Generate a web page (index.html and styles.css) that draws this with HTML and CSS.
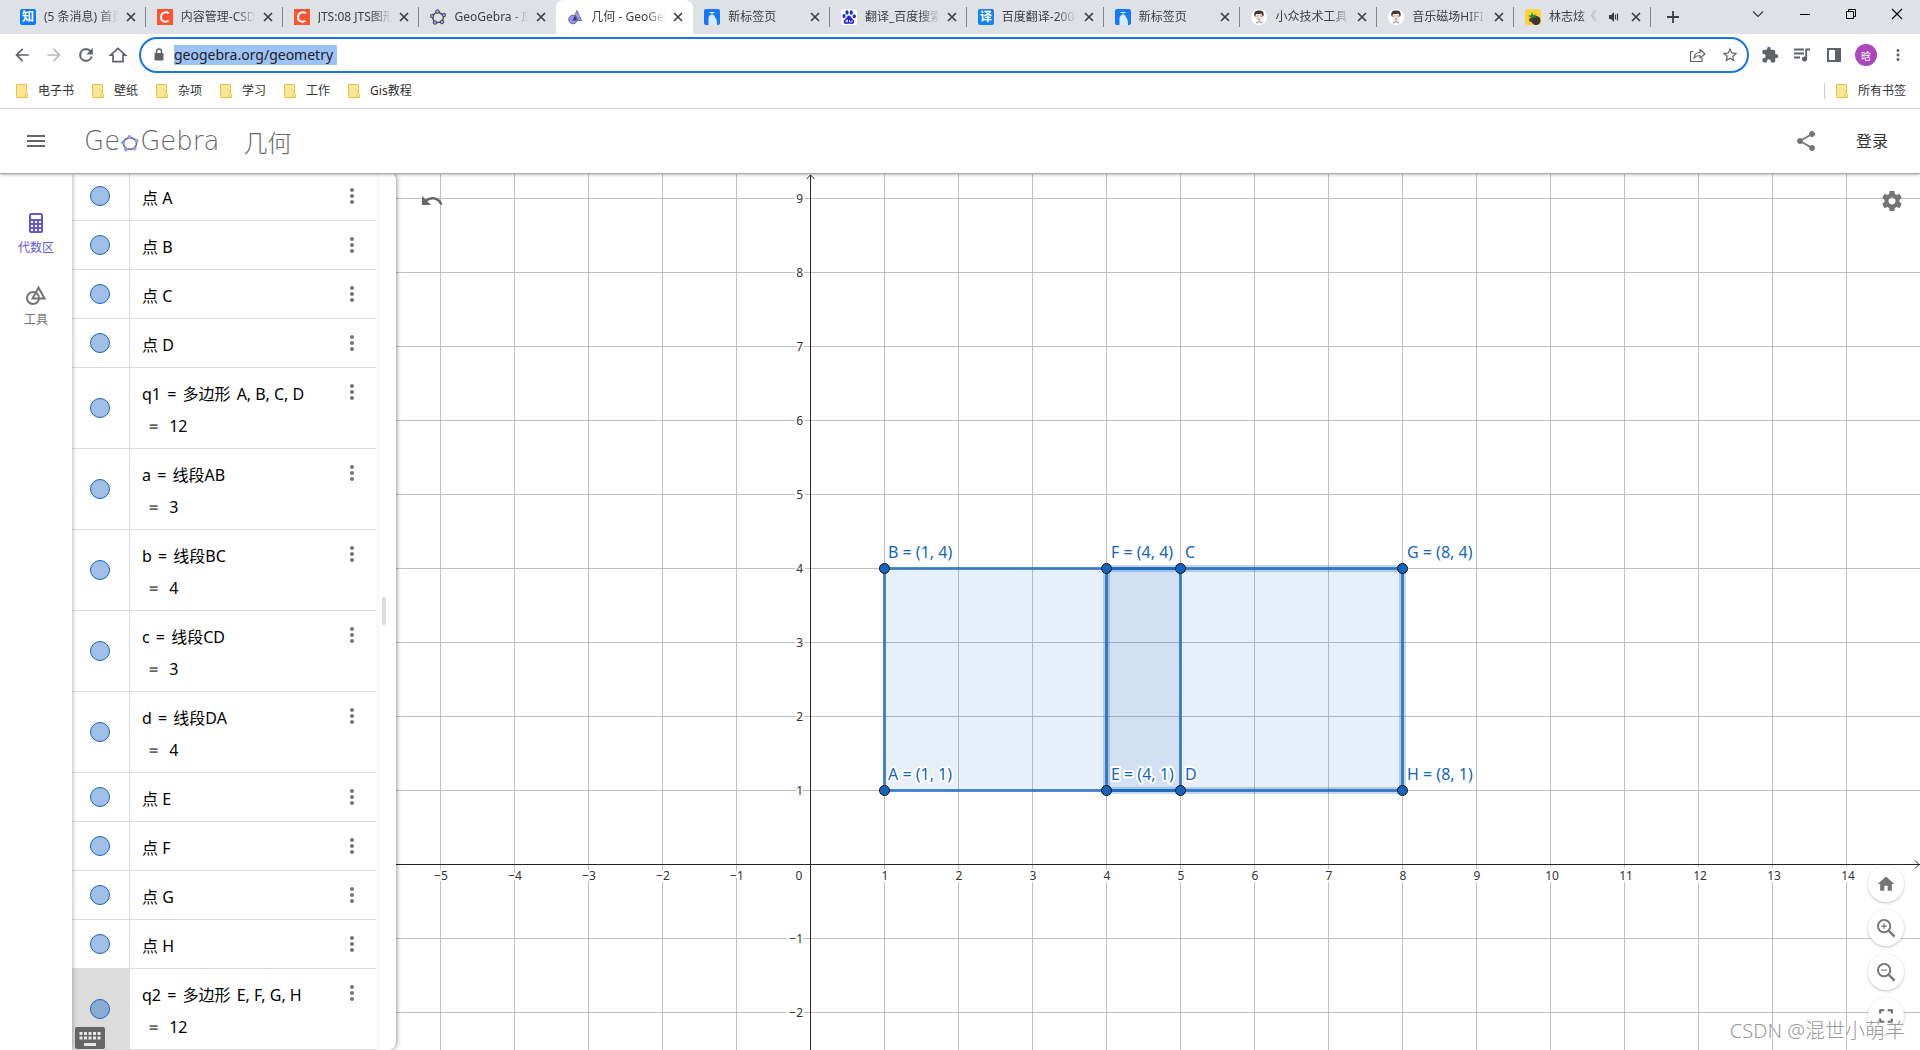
FILE: index.html
```html
<!DOCTYPE html>
<html lang="zh-CN">
<head>
<meta charset="utf-8">
<title>几何 - GeoGebra</title>
<link rel="stylesheet" href="styles.css">
</head>
<body>
<svg class="defs" width="0" height="0" aria-hidden="true">
  <symbol id="i-close" viewBox="0 0 16 16"><path d="M4 4l8 8M12 4l-8 8" fill="none" stroke="#3c4043" stroke-width="1.7"/></symbol>
  <symbol id="i-folder" viewBox="0 0 16 16"><path d="M2.5 1.500h10v9l1 .8v3.200h-11z" fill="#ffe591" stroke="#e8c348"/><path d="M11 14.500v-3l1.500-1" fill="none" stroke="#e8c348"/></symbol>
  <symbol id="i-csdn" viewBox="0 0 16 16"><rect width="16" height="16" fill="#fc5531"/><path d="M12 4.300C9 2.300 4.200 3.200 4 8c-.1 4.500 4.300 5.700 7.500 3.800" fill="none" stroke="#fff" stroke-width="1.900"/></symbol>
  <symbol id="i-newtab" viewBox="0 0 16 16"><rect width="16" height="16" rx="2" fill="#1478ff"/><path d="M5.500 3h5v1h-2v1.500h-1V4h-2z" fill="#fff"/><path d="M4.500 16V9.500C4.500 4.500 11 4.500 11 8.500c2 1.500 2 4 2 7.500z" fill="#d9ecff"/></symbol>
  <symbol id="i-face" viewBox="0 0 16 16"><circle cx="8" cy="8" r="8" fill="#fff"/><path d="M5 5.500c0 4 1 6 3 6s3.200-2 3.200-6" fill="#fbe9e1" stroke="#bbb" stroke-width=".5"/><path d="M3.500 7C2.500 2.500 5 1.500 8 1.500s5.500 1 4.500 5.500l-1 1c0-2-.5-3-1.500-3.500-2 .8-3.500.3-5 .5-.5 1-.5 2-.5 3z" fill="#40352f"/><path d="M6 7h1.500M9 7h1.500M7 10h2M5 14l3-1.500 3 1.500" stroke="#554840" stroke-width=".7" fill="none"/></symbol>
  <symbol id="i-dots" viewBox="0 0 24 24"><path d="M12 8c1.100 0 2-.9 2-2s-.9-2-2-2-2 .9-2 2 .9 2 2 2zm0 2c-1.100 0-2 .9-2 2s.9 2 2 2 2-.9 2-2-.9-2-2-2zm0 6c-1.100 0-2 .9-2 2s.9 2 2 2 2-.9 2-2-.9-2-2-2z" fill="currentColor"/></symbol>
</svg>

<header class="browser">
  <div class="tabstrip">
    <div class="tab">
      <svg class="favicon" viewBox="0 0 16 16"><rect width="16" height="16" rx="2" fill="#0b7cff"/><text x="8" y="12" class="glyph">知</text></svg>
      <span class="tab-title">(5 条消息) 首页</span><button class="tab-close" aria-label="关闭"><svg><use href="#i-close"/></svg></button>
    </div>
    <div class="tab">
      <svg class="favicon"><use href="#i-csdn"/></svg>
      <span class="tab-title">内容管理-CSDN</span><button class="tab-close" aria-label="关闭"><svg><use href="#i-close"/></svg></button>
    </div>
    <div class="tab">
      <svg class="favicon"><use href="#i-csdn"/></svg>
      <span class="tab-title">JTS:08 JTS图形</span><button class="tab-close" aria-label="关闭"><svg><use href="#i-close"/></svg></button>
    </div>
    <div class="tab tab-plain">
      <svg class="favicon" viewBox="0 0 16 16"><path d="M7.500 2.500l6.500 4-2 6.500-7.500.8L2 7z" fill="none" stroke="#555" stroke-width="1.500"/><g fill="#9999ff" stroke="#333" stroke-width=".8"><circle cx="7.500" cy="2.500" r="1.800"/><circle cx="14" cy="6" r="1.800"/><circle cx="12" cy="13" r="1.800"/><circle cx="5" cy="13.500" r="1.800"/><circle cx="2" cy="7" r="1.800"/></g></svg>
      <span class="tab-title">GeoGebra - 应用</span><button class="tab-close" aria-label="关闭"><svg><use href="#i-close"/></svg></button>
    </div>
    <div class="tab tab-active">
      <svg class="favicon" viewBox="0 0 16 16"><path d="M10 1.500l4.500 10H5.500z" fill="#9999ff" stroke="#666" stroke-width=".8"/><circle cx="6" cy="10.500" r="4.300" fill="#8080f8" fill-opacity=".85" stroke="#555" stroke-width=".8"/><path d="M7.700 7l2 2.500-.5 2H5.700z" fill="#333a70"/></svg>
      <span class="tab-title">几何 - GeoGebra</span><button class="tab-close" aria-label="关闭"><svg><use href="#i-close"/></svg></button>
    </div>
    <div class="tab">
      <svg class="favicon"><use href="#i-newtab"/></svg>
      <span class="tab-title">新标签页</span><button class="tab-close" aria-label="关闭"><svg><use href="#i-close"/></svg></button>
    </div>
    <div class="tab">
      <svg class="favicon" viewBox="0 0 16 16"><rect width="16" height="16" rx="1" fill="#fff"/><g fill="#2529d8"><ellipse cx="3" cy="7" rx="1.600" ry="2"/><ellipse cx="6" cy="3.500" rx="1.600" ry="2.200"/><ellipse cx="10.300" cy="3.500" rx="1.600" ry="2.200"/><ellipse cx="13.300" cy="7.300" rx="1.600" ry="2"/><path d="M8 6.500c2 0 2.300 2.500 4 3.800 2.200 1.800 1.300 5-1.500 4.700-1.600-.2-3.200-.2-5 0C2.500 15.300 1.800 12 4 10.300 5.800 9 6 6.500 8 6.500z"/></g><path d="M6.500 10.500v2.500h-1.500v-1.500h1.500M8.500 11v2H11v-2" fill="none" stroke="#fff" stroke-width=".8"/></svg>
      <span class="tab-title">翻译_百度搜索</span><button class="tab-close" aria-label="关闭"><svg><use href="#i-close"/></svg></button>
    </div>
    <div class="tab">
      <svg class="favicon" viewBox="0 0 16 16"><rect width="16" height="16" rx="2" fill="#1283f5"/><text x="8" y="12" class="glyph">译</text></svg>
      <span class="tab-title">百度翻译-200种</span><button class="tab-close" aria-label="关闭"><svg><use href="#i-close"/></svg></button>
    </div>
    <div class="tab">
      <svg class="favicon"><use href="#i-newtab"/></svg>
      <span class="tab-title">新标签页</span><button class="tab-close" aria-label="关闭"><svg><use href="#i-close"/></svg></button>
    </div>
    <div class="tab">
      <svg class="favicon"><use href="#i-face"/></svg>
      <span class="tab-title">小众技术工具</span><button class="tab-close" aria-label="关闭"><svg><use href="#i-close"/></svg></button>
    </div>
    <div class="tab">
      <svg class="favicon"><use href="#i-face"/></svg>
      <span class="tab-title">音乐磁场HIFI</span><button class="tab-close" aria-label="关闭"><svg><use href="#i-close"/></svg></button>
    </div>
    <div class="tab">
      <svg class="favicon" viewBox="0 0 16 16"><rect width="16" height="16" rx="3" fill="#fdd23c"/><circle cx="11" cy="11.500" r="4.500" fill="#3b3533"/><path d="M3 7l3-1 1-3 1.500 3L12 5l-2 2 2 2-4-1-3 3 .500-3z" fill="#28902c"/><circle cx="6" cy="11" r="2" fill="#4d3a2c"/></svg>
      <span class="tab-title">林志炫《</span>
      <svg class="audio" viewBox="0 0 12 12"><path d="M1 4h2l3-3v10L3 8H1z" fill="#3c4043"/><path d="M7.500 3.500v5M9.500 2.500v7" stroke="#3c4043" stroke-width="1.200"/></svg>
      <button class="tab-close" aria-label="关闭"><svg><use href="#i-close"/></svg></button>
    </div>
    <div class="window-controls">
      <button aria-label="新标签页"><svg viewBox="0 0 16 16"><path d="M8 2v12M2 8h12" stroke="#3c4043" stroke-width="1.800"/></svg></button>
      <button class="chevron" aria-label="搜索标签页"><svg viewBox="0 0 16 16"><path d="M3 5.500l5 5 5-5" fill="none" stroke="#333" stroke-width="1.100"/></svg></button>
      <button aria-label="最小化"><svg viewBox="0 0 16 16"><path d="M3 8.500h10" stroke="#000"/></svg></button>
      <button aria-label="还原"><svg viewBox="0 0 16 16"><path d="M3.500 5.500h7v7h-7zM5.500 5V3.500h7v7H11" fill="none" stroke="#000"/></svg></button>
      <button aria-label="关闭窗口"><svg viewBox="0 0 16 16"><path d="M3 3l10 10M13 3L3 13" stroke="#000" stroke-width="1.100"/></svg></button>
    </div>
  </div>

  <div class="toolbar">
    <nav class="nav-buttons">
      <button aria-label="后退"><svg viewBox="0 0 24 24"><path d="M20 11H7.800l5.600-5.600L12 4l-8 8 8 8 1.400-1.400L7.800 13H20z" fill="#5f6368"/></svg></button>
      <button aria-label="前进"><svg viewBox="0 0 24 24"><path d="M12 4l-1.400 1.400 5.600 5.600H4v2h12.200l-5.600 5.600L12 20l8-8z" fill="#bbb"/></svg></button>
      <button aria-label="刷新"><svg viewBox="0 0 24 24"><path d="M17.650 6.350A7.950 7.950 0 0 0 12 4a8 8 0 1 0 7.730 10h-2.080A6 6 0 1 1 12 6c1.660 0 3.140.690 4.220 1.780L13 11h7V4z" fill="#5f6368" stroke="#5f6368" stroke-width=".5"/></svg></button>
      <button aria-label="主页"><svg viewBox="0 0 24 24"><path d="M12 4L3 12.200h3V20h12v-7.800h3z" fill="none" stroke="#5f6368" stroke-width="2"/></svg></button>
    </nav>
    <div class="omnibox">
      <svg class="lock" viewBox="0 0 12 16"><path d="M3.500 6V4.500a2.500 2.500 0 0 1 5 0V6" fill="none" stroke="#5f6368" stroke-width="1.500"/><rect x="1.500" y="6" width="9" height="7.500" rx="1" fill="#5f6368"/></svg>
      <input class="url" type="text" value="geogebra.org/geometry" aria-label="地址栏">
      <div class="omnibox-actions">
        <button aria-label="分享"><svg viewBox="0 0 18 18"><path d="M4.500 5.500h-3v10h11.500v-3.500" fill="none" stroke="#5f6368" stroke-width="1.200"/><path d="M5 12c.5-3.500 2.500-5.500 6-5.500V3.500L16 8l-5 4V9.500C8.500 9.500 6.500 10.300 5 12z" fill="none" stroke="#5f6368" stroke-width="1.200" stroke-linejoin="round"/></svg></button>
        <button aria-label="收藏"><svg viewBox="0 0 24 24"><path d="M22 9.240l-7.190-.62L12 2 9.190 8.630 2 9.240l5.460 4.730L5.820 21 12 17.270 18.180 21l-1.630-7.030zM12 15.400l-3.760 2.270 1-4.280-3.320-2.880 4.380-.38L12 6.100l1.710 4.040 4.380.38-3.320 2.880 1 4.280z" fill="#5f6368"/></svg></button>
      </div>
    </div>
    <div class="extensions">
      <button aria-label="扩展程序"><svg viewBox="0 0 24 24"><path d="M20.500 11H19V7a2 2 0 0 0-2-2h-4V3.500a2.500 2.500 0 0 0-5 0V5H4a2 2 0 0 0-2 2v3.800h1.500a2.700 2.700 0 0 1 0 5.400H2V20a2 2 0 0 0 2 2h3.800v-1.500a2.700 2.700 0 0 1 5.400 0V22H17a2 2 0 0 0 2-2v-4h1.500a2.500 2.500 0 0 0 0-5z" fill="#5f6368"/></svg></button>
      <button aria-label="媒体"><svg viewBox="0 0 18 18"><path d="M1 3.500h10M1 7.500h10M1 11.500h6" stroke="#5f6368" stroke-width="1.800"/><circle cx="11.500" cy="13" r="2.500" fill="#5f6368"/><path d="M13.200 13V3.500H17" fill="none" stroke="#5f6368" stroke-width="1.800"/></svg></button>
      <button aria-label="侧边栏"><svg viewBox="0 0 18 18"><path d="M2 2h14v14H2zM4 4v10h6V4z" fill="#5f6368" fill-rule="evenodd"/></svg></button>
      <button class="avatar" aria-label="个人资料">晗</button>
      <button aria-label="菜单" class="chrome-menu"><svg><use href="#i-dots"/></svg></button>
    </div>
  </div>

  <nav class="bookmarks">
    <a href="#"><svg><use href="#i-folder"/></svg>电子书</a>
    <a href="#"><svg><use href="#i-folder"/></svg>壁纸</a>
    <a href="#"><svg><use href="#i-folder"/></svg>杂项</a>
    <a href="#"><svg><use href="#i-folder"/></svg>学习</a>
    <a href="#"><svg><use href="#i-folder"/></svg>工作</a>
    <a href="#"><svg><use href="#i-folder"/></svg>Gis教程</a>
    <a href="#" class="all-bookmarks"><svg><use href="#i-folder"/></svg>所有书签</a>
  </nav>
</header>

<div class="appbar">
  <button class="menu" aria-label="菜单"><svg viewBox="0 0 24 24"><path d="M3 18h18v-2H3zm0-5h18v-2H3zm0-7v2h18V6z" fill="#666"/></svg></button>
  <a class="logo" href="#" aria-label="GeoGebra"><span>Ge</span><svg viewBox="0 0 18 18"><ellipse cx="9" cy="9.500" rx="6.500" ry="5.800" fill="none" stroke="#666" stroke-width="1.500"/><g fill="#9999ff"><circle cx="8.500" cy="3" r="2"/><circle cx="15.700" cy="7" r="2"/><circle cx="13.500" cy="14.500" r="2"/><circle cx="5" cy="15.500" r="2"/><circle cx="2" cy="8.500" r="2"/></g></svg><span>Gebra</span></a>
  <h1 class="app-name">几何</h1>
  <button class="share" aria-label="分享"><svg viewBox="0 0 24 24"><path d="M18 16.080c-.76 0-1.440.3-1.960.77L8.910 12.700c.05-.23.09-.46.09-.7s-.04-.47-.09-.7l7.050-4.110c.54.5 1.250.81 2.040.81 1.660 0 3-1.340 3-3s-1.340-3-3-3-3 1.340-3 3c0 .24.04.47.09.7L8.040 9.810C7.500 9.310 6.790 9 6 9c-1.660 0-3 1.340-3 3s1.340 3 3 3c.79 0 1.500-.31 2.040-.81l7.120 4.160c-.05.21-.08.43-.08.65 0 1.610 1.310 2.920 2.920 2.920s2.920-1.310 2.920-2.920-1.310-2.920-2.920-2.920z" fill="#757575"/></svg></button>
  <a class="signin" href="#">登录</a>
</div>

<main class="workspace">
  <nav class="rail">
    <button class="rail-item rail-selected"><svg viewBox="0 0 24 24"><path fill-rule="evenodd" d="M7 2h10a2 2 0 0 1 2 2v16a2 2 0 0 1-2 2H7a2 2 0 0 1-2-2V4a2 2 0 0 1 2-2zM7 4v4h10V4zM7 10v2h2v-2zM11 10v2h2v-2zM15 10v2h2v-2zM7 14v2h2v-2zM11 14v2h2v-2zM15 14v2h2v-2zM7 18v2h2v-2zM11 18v2h2v-2zM15 18v2h2v-2z" fill="currentColor"/></svg>代数区</button>
    <button class="rail-item"><svg viewBox="0 0 24 24"><circle cx="9" cy="15" r="6" fill="none" stroke="currentColor" stroke-width="2"/><path d="M14.500 4.500L20.500 15.500H8.500z" fill="none" stroke="currentColor" stroke-width="2"/></svg>工具</button>
  </nav>

  <section class="algebra">
    <ul class="rows">
      <li class="row"><div class="cell"><button class="marker" aria-label="显示 A"></button></div><div class="body"><p>点 A</p></div><button class="more" aria-label="更多"><svg><use href="#i-dots"/></svg></button></li>
      <li class="row"><div class="cell"><button class="marker" aria-label="显示 B"></button></div><div class="body"><p>点 B</p></div><button class="more" aria-label="更多"><svg><use href="#i-dots"/></svg></button></li>
      <li class="row"><div class="cell"><button class="marker" aria-label="显示 C"></button></div><div class="body"><p>点 C</p></div><button class="more" aria-label="更多"><svg><use href="#i-dots"/></svg></button></li>
      <li class="row"><div class="cell"><button class="marker" aria-label="显示 D"></button></div><div class="body"><p>点 D</p></div><button class="more" aria-label="更多"><svg><use href="#i-dots"/></svg></button></li>
      <li class="row"><div class="cell"><button class="marker" aria-label="显示 q1"></button></div><div class="body"><p>q1 <span class="op">=</span> 多边形 <span class="args">A, B, C, D</span></p><p class="value"><b>=</b>12</p></div><button class="more" aria-label="更多"><svg><use href="#i-dots"/></svg></button></li>
      <li class="row"><div class="cell"><button class="marker" aria-label="显示 a"></button></div><div class="body"><p>a <span class="op">=</span> 线段AB</p><p class="value"><b>=</b>3</p></div><button class="more" aria-label="更多"><svg><use href="#i-dots"/></svg></button></li>
      <li class="row"><div class="cell"><button class="marker" aria-label="显示 b"></button></div><div class="body"><p>b <span class="op">=</span> 线段BC</p><p class="value"><b>=</b>4</p></div><button class="more" aria-label="更多"><svg><use href="#i-dots"/></svg></button></li>
      <li class="row"><div class="cell"><button class="marker" aria-label="显示 c"></button></div><div class="body"><p>c <span class="op">=</span> 线段CD</p><p class="value"><b>=</b>3</p></div><button class="more" aria-label="更多"><svg><use href="#i-dots"/></svg></button></li>
      <li class="row"><div class="cell"><button class="marker" aria-label="显示 d"></button></div><div class="body"><p>d <span class="op">=</span> 线段DA</p><p class="value"><b>=</b>4</p></div><button class="more" aria-label="更多"><svg><use href="#i-dots"/></svg></button></li>
      <li class="row"><div class="cell"><button class="marker" aria-label="显示 E"></button></div><div class="body"><p>点 E</p></div><button class="more" aria-label="更多"><svg><use href="#i-dots"/></svg></button></li>
      <li class="row"><div class="cell"><button class="marker" aria-label="显示 F"></button></div><div class="body"><p>点 F</p></div><button class="more" aria-label="更多"><svg><use href="#i-dots"/></svg></button></li>
      <li class="row"><div class="cell"><button class="marker" aria-label="显示 G"></button></div><div class="body"><p>点 G</p></div><button class="more" aria-label="更多"><svg><use href="#i-dots"/></svg></button></li>
      <li class="row"><div class="cell"><button class="marker" aria-label="显示 H"></button></div><div class="body"><p>点 H</p></div><button class="more" aria-label="更多"><svg><use href="#i-dots"/></svg></button></li>
      <li class="row row-selected"><div class="cell"><button class="marker" aria-label="显示 q2"></button></div><div class="body"><p>q2 <span class="op">=</span> 多边形 <span class="args">E, F, G, H</span></p><p class="value"><b>=</b>12</p></div><button class="more" aria-label="更多"><svg><use href="#i-dots"/></svg></button></li>
    </ul>
    <div class="scroll-track"></div>
    <div class="splitter"></div>
    <button class="keyboard" aria-label="键盘"><svg viewBox="0 0 30 22"><rect width="30" height="22" rx="2" fill="#666"/><path d="M4.500 6.500h21.500M4.500 11h21.500" stroke="#e6e6e6" stroke-width="3" stroke-dasharray="3 1.500"/><path d="M9 17.500h12" stroke="#e6e6e6" stroke-width="3"/></svg></button>
  </section>

  <section class="graphics">
    <svg class="plot" role="img" aria-label="绘图区">
      <defs>
        <pattern id="grid" patternUnits="userSpaceOnUse" x="44" y="26" width="74" height="74"><path d="M0 .5h74M.5 0v74" stroke="#c0c0c0"/></pattern>
      </defs>
      <rect width="100%" height="100%" fill="url(#grid)"/>
      <g class="axes">
        <path d="M414.500 3v1000M410.500 7l4-4 4 4"/>
        <line x1="0" y1="692.500" x2="100%" y2="692.500"/>
        <svg x="100%" y="692" overflow="visible"><path d="M-5-3.500l4 4-4 4"/></svg>
      </g>
      <g class="ticks ticks-x">
        <text x="45" y="708">−5</text><text x="119" y="708">−4</text><text x="193" y="708">−3</text><text x="267" y="708">−2</text><text x="341" y="708">−1</text>
        <text x="403" y="708">0</text>
        <text x="489" y="708">1</text><text x="563" y="708">2</text><text x="637" y="708">3</text><text x="711" y="708">4</text><text x="785" y="708">5</text><text x="859" y="708">6</text><text x="933" y="708">7</text><text x="1007" y="708">8</text><text x="1081" y="708">9</text><text x="1156" y="708">10</text><text x="1230" y="708">11</text><text x="1304" y="708">12</text><text x="1378" y="708">13</text><text x="1452" y="708">14</text>
      </g>
      <g class="ticks ticks-y">
        <text x="407" y="31">9</text><text x="407" y="105">8</text><text x="407" y="179">7</text><text x="407" y="253">6</text><text x="407" y="327">5</text><text x="407" y="401">4</text><text x="407" y="475">3</text><text x="407" y="549">2</text><text x="407" y="623">1</text><text x="407" y="771">−1</text><text x="407" y="845">−2</text>
      </g>
      <g class="shapes">
        <path class="fill" d="M488.500 396.500h296v222h-296z"/>
        <path class="fill" d="M710.500 396.500h296v222h-296z"/>
        <path class="halo" d="M710.500 396.500h296v222h-296z"/>
        <path class="edge" d="M488.500 396.500h296v222h-296z"/>
        <path class="edge" d="M710.500 396.500h296v222h-296z"/>
      </g>
      <g class="labels">
        <text x="492" y="386">B = (1, 4)</text><text x="715" y="386">F = (4, 4)</text><text x="789" y="386">C</text><text x="1011" y="386">G = (8, 4)</text>
        <text x="492" y="608">A = (1, 1)</text><text x="715" y="608">E = (4, 1)</text><text x="789" y="608">D</text><text x="1011" y="608">H = (8, 1)</text>
      </g>
      <g class="points">
        <circle cx="488.500" cy="396.500" r="5"/><circle cx="710.500" cy="396.500" r="5"/><circle cx="784.500" cy="396.500" r="5"/><circle cx="1006.500" cy="396.500" r="5"/>
        <circle cx="488.500" cy="618.500" r="5"/><circle cx="710.500" cy="618.500" r="5"/><circle cx="784.500" cy="618.500" r="5"/><circle cx="1006.500" cy="618.500" r="5"/>
      </g>
    </svg>
    <button class="undo" aria-label="撤销"><svg viewBox="0 0 24 24"><path d="M12.500 8c-2.650 0-5.050.99-6.900 2.600L2 7v9h9l-3.620-3.620c1.390-1.160 3.160-1.880 5.120-1.880 3.540 0 6.550 2.310 7.600 5.500l2.370-.78C21.080 11.030 17.150 8 12.500 8z" fill="#666"/></svg></button>
    <button class="settings" aria-label="设置"><svg viewBox="0 0 24 24"><path d="M19.430 12.980c.04-.32.07-.64.07-.98s-.03-.66-.07-.98l2.110-1.650c.19-.15.24-.42.12-.64l-2-3.460c-.12-.22-.39-.3-.61-.22l-2.490 1c-.52-.4-1.080-.73-1.690-.98l-.38-2.650C14.460 2.180 14.250 2 14 2h-4c-.25 0-.46.18-.49.42l-.38 2.650c-.61.25-1.170.59-1.690.98l-2.490-1c-.23-.09-.49 0-.61.22l-2 3.460c-.13.22-.07.49.12.64l2.110 1.650c-.04.32-.07.65-.07.98s.03.66.07.98l-2.110 1.650c-.19.15-.24.42-.12.64l2 3.460c.12.22.39.3.61.22l2.490-1c.52.4 1.080.73 1.690.98l.38 2.650c.03.24.24.42.49.42h4c.25 0 .46-.18.49-.42l.38-2.650c.61-.25 1.170-.59 1.690-.98l2.490 1c.23.09.49 0 .61-.22l2-3.460c.12-.22.07-.49-.12-.64zM12 15.500c-1.930 0-3.500-1.570-3.500-3.500s1.570-3.500 3.500-3.500 3.500 1.570 3.500 3.500-1.570 3.500-3.500 3.500z" fill="#757575"/></svg></button>
    <div class="zoom-tools">
      <button aria-label="标准视图"><svg viewBox="0 0 24 24"><path d="M10 20v-6h4v6h5v-8h3L12 3 2 12h3v8z" fill="#757575"/></svg></button>
      <button aria-label="放大"><svg viewBox="1 1 21 21"><circle cx="9.500" cy="9.500" r="6.500" fill="none" stroke="#757575" stroke-width="2"/><path d="M14.500 14.500l6 6" stroke="#757575" stroke-width="2.500"/><path d="M6.500 9.500h6M9.500 6.500v6" stroke="#757575" stroke-width="1.200"/></svg></button>
      <button aria-label="缩小"><svg viewBox="1 1 21 21"><circle cx="9.500" cy="9.500" r="6.500" fill="none" stroke="#757575" stroke-width="2"/><path d="M14.500 14.500l6 6" stroke="#757575" stroke-width="2.500"/><path d="M6.500 9.500h6" stroke="#757575" stroke-width="1.200"/></svg></button>
      <button aria-label="全屏"><svg viewBox="0 0 24 24"><path d="M5 9V5h5M14 5h5v4M19 15v4h-5M10 19H5v-4" fill="none" stroke="#666" stroke-width="2.400"/></svg></button>
    </div>
    <p class="watermark">CSDN @混世小萌羊</p>
  </section>
</main>
</body>
</html>
```
FILE: styles.css
```css
* { box-sizing: border-box; }

body {
  margin: 0;
  min-height: 100vh;
  display: flex;
  flex-direction: column;
  background: #fff;
  color: #000;
  font-family: "Noto Sans", "Noto Sans CJK SC", sans-serif;
  font-size: 12px;
}

button {
  display: flex;
  align-items: center;
  justify-content: center;
  flex: none;
  margin: 0;
  padding: 0;
  border: 0;
  background: none;
  font: inherit;
  color: inherit;
}

a { color: inherit; text-decoration: none; }
svg { display: block; flex: none; }
p, h1, ul { margin: 0; padding: 0; }
.defs { position: absolute; }

/* Browser tabs */
.tabstrip {
  display: flex;
  height: 34px;
  padding-left: 9px;
  background: #dee1e6;
}

.tab {
  flex: 0 1 240px;
  min-width: 0;
  display: flex;
  align-items: center;
  padding: 0 7px 0 11px;
  color: #3c4043;
  background: linear-gradient(#80868b, #80868b) right center / 1px 20px no-repeat;
}

.tab-plain { background: none; }
.tab-active { background: #fff; border-radius: 8px 8px 0 0; }
.favicon { width: 16px; height: 16px; margin-right: 8px; }

.glyph {
  fill: #fff;
  font-size: 12px;
  font-weight: 700;
  text-anchor: middle;
}

.tab-title {
  flex: 1;
  min-width: 0;
  margin-right: 4px;
  overflow: hidden;
  white-space: nowrap;
  line-height: 18px;
  mask-image: linear-gradient(to right, #000 calc(100% - 20px), transparent);
}

.tab-close svg { width: 16px; height: 16px; }
.audio { width: 12px; height: 12px; margin: 0 8px 0 4px; }

.window-controls {
  flex: 0 0 269px;
  display: flex;
  align-items: flex-start;
}

.window-controls button { width: 46px; height: 28px; }
.window-controls button:first-child { width: 44px; height: 34px; margin-right: 40px; }
.window-controls svg { width: 16px; height: 16px; }
.window-controls .chevron { width: 47px; }

/* Address bar */
.toolbar {
  display: flex;
  align-items: center;
  height: 42px;
  padding: 0 13px 0 12px;
}

.nav-buttons { display: flex; gap: 12px; margin-right: 11px; }
.nav-buttons svg { width: 20px; height: 20px; }

.omnibox {
  flex: 1;
  display: flex;
  align-items: center;
  height: 36px;
  padding: 0 8px 0 12px;
  border: 2px solid #1a73e8;
  border-radius: 18px;
}

.lock { width: 12px; height: 16px; margin-right: 9px; }

.url {
  width: 163px;
  height: 20px;
  padding: 0;
  border: 0;
  background: #9cc2f6;
  color: #202124;
  font: 14px "Noto Sans", sans-serif;
  line-height: 20px;
}

.omnibox-actions { display: flex; gap: 14px; margin-left: auto; }
.omnibox-actions svg { width: 18px; height: 18px; }
.extensions { display: flex; align-items: center; gap: 14px; margin-left: 12px; }
.extensions svg { width: 18px; height: 18px; }
.extensions .chrome-menu { color: #5f6368; margin-left: -2px; }

.avatar {
  width: 22px;
  height: 22px;
  margin-left: -2px;
  border-radius: 50%;
  background: #ab47bc;
  color: #fff;
  font-size: 10px;
}

.bookmarks {
  display: flex;
  align-items: center;
  gap: 16px;
  height: 33px;
  padding: 0 14px 2px;
  border-bottom: 1px solid #dadce0;
  color: #303134;
}

.bookmarks a { display: flex; align-items: center; gap: 8px; line-height: 16px; }
.bookmarks svg { width: 16px; height: 16px; }
.all-bookmarks { margin-left: auto; padding-left: 9px; border-left: 1px solid #cacdd1; }

/* Application header */
.appbar {
  position: relative;
  z-index: 3;
  display: flex;
  align-items: center;
  height: 65px;
  padding: 0 32px 0 24px;
  border-bottom: 1px solid #a8a8a8;
  background: #fff;
  box-shadow: 0 1px 3px rgba(0, 0, 0, .25);
}

.menu svg { width: 24px; height: 24px; }

.logo {
  display: flex;
  align-items: center;
  margin-left: 36px;
  color: #666;
  font: 200 26px/32px "DejaVu Sans", sans-serif;
}

.logo svg { width: 18px; height: 18px; margin: 4px 1px 0; }

.app-name {
  margin: 4px 0 0 24px;
  color: #666;
  font-size: 24px;
  font-weight: 300;
  line-height: 32px;
}

.share { margin-left: auto; }
.share svg { width: 24px; height: 24px; }
.signin { margin-left: 38px; color: #333; font-size: 16px; line-height: 24px; }

.workspace {
  flex: 1;
  display: flex;
  align-items: stretch;
  margin-top: -2px;
}

/* Side rail */
.rail {
  position: relative;
  z-index: 2;
  flex: 0 0 72px;
  display: flex;
  flex-direction: column;
  gap: 14px;
  padding-top: 33px;
  background: #fff;
  box-shadow: 0 0 5px rgba(0, 0, 0, .35);
}

.rail-item {
  flex-direction: column;
  gap: 4px;
  height: 58px;
  color: #747474;
  line-height: 18px;
}

.rail-item svg { width: 24px; height: 24px; }
.rail-selected { color: #6557d2; }

/* Algebra list */
.algebra {
  position: relative;
  z-index: 1;
  flex: 0 0 324px;
  display: flex;
  background: #fff;
  border-radius: 0 8px 8px 0;
  box-shadow: 1px 0 4px rgba(0, 0, 0, .4);
}

.rows { flex: 1; list-style: none; }

.row {
  display: flex;
  border-bottom: 1px solid #dcdcdc;
}

.cell {
  flex: 0 0 58px;
  display: flex;
  align-items: center;
  justify-content: center;
  padding-right: 1px;
  border-right: 1px solid #dcdcdc;
}

.marker {
  width: 20px;
  height: 20px;
  border: 1px solid #1565c0;
  border-radius: 50%;
  background: #a1bfe6;
}

.row-selected .cell { background: #dcdcdc; }
.row-selected .marker { background: #8aaad2; }

.body {
  flex: 1;
  padding: 10px 0 5px 12px;
  font-size: 16px;
  line-height: 32px;
}

.op { margin: 0 2px; }
.args { margin-left: 2px; }
.value { display: flex; gap: 11px; padding-left: 7px; line-height: 33px; }
.value b { color: #666; }
.more { align-self: flex-start; width: 48px; height: 48px; color: #757575; }
.more svg { width: 24px; height: 24px; }
.scroll-track { flex: 0 0 4px; background: #fafafa; }

.splitter {
  flex: 0 0 4px;
  align-self: center;
  height: 28px;
  margin: 0 10px 0 2px;
  border-radius: 2px;
  background: #dcdce0;
}

.keyboard { position: absolute; left: 3px; bottom: 1px; }
.keyboard svg { width: 30px; height: 22px; }

/* Graphics view */
.graphics { position: relative; flex: 1; min-width: 0; }
.plot { position: absolute; width: 100%; height: 100%; }
.axes { fill: none; stroke: #252525; }

.ticks {
  fill: #333;
  stroke: #fff;
  stroke-width: 4px;
  paint-order: stroke;
  font-size: 12px;
}

.ticks-x { text-anchor: middle; }
.ticks-y { text-anchor: end; }
.fill { fill: #1565c0; fill-opacity: .1; }
.halo { fill: none; stroke: #1565c0; stroke-opacity: .25; stroke-width: 7px; }
.edge { fill: none; stroke: #1565c0; stroke-opacity: .75; stroke-width: 3px; }

.labels {
  fill: #1565c0;
  stroke: #fff;
  stroke-width: 4px;
  stroke-linejoin: round;
  paint-order: stroke;
  font-size: 16px;
}

.points { fill: #1565c0; stroke: #111; stroke-width: 1px; }

.undo { position: absolute; left: 24px; top: 17px; }
.undo svg, .settings svg { width: 24px; height: 24px; }
.settings { position: absolute; right: 16px; top: 17px; }

.zoom-tools {
  position: absolute;
  right: 16px;
  bottom: 16px;
  display: flex;
  flex-direction: column;
  gap: 8px;
}

.zoom-tools button {
  width: 36px;
  height: 36px;
  border-radius: 50%;
  background: #fff;
  box-shadow: 0 1px 3px rgba(0, 0, 0, .25);
}

.zoom-tools svg { width: 20px; height: 20px; }

.watermark {
  position: absolute;
  right: 15px;
  bottom: 4px;
  color: #999;
  font-size: 20px;
  font-weight: 300;
  line-height: 30px;
  text-shadow: 1px 1px 1px #fff;
}
```
